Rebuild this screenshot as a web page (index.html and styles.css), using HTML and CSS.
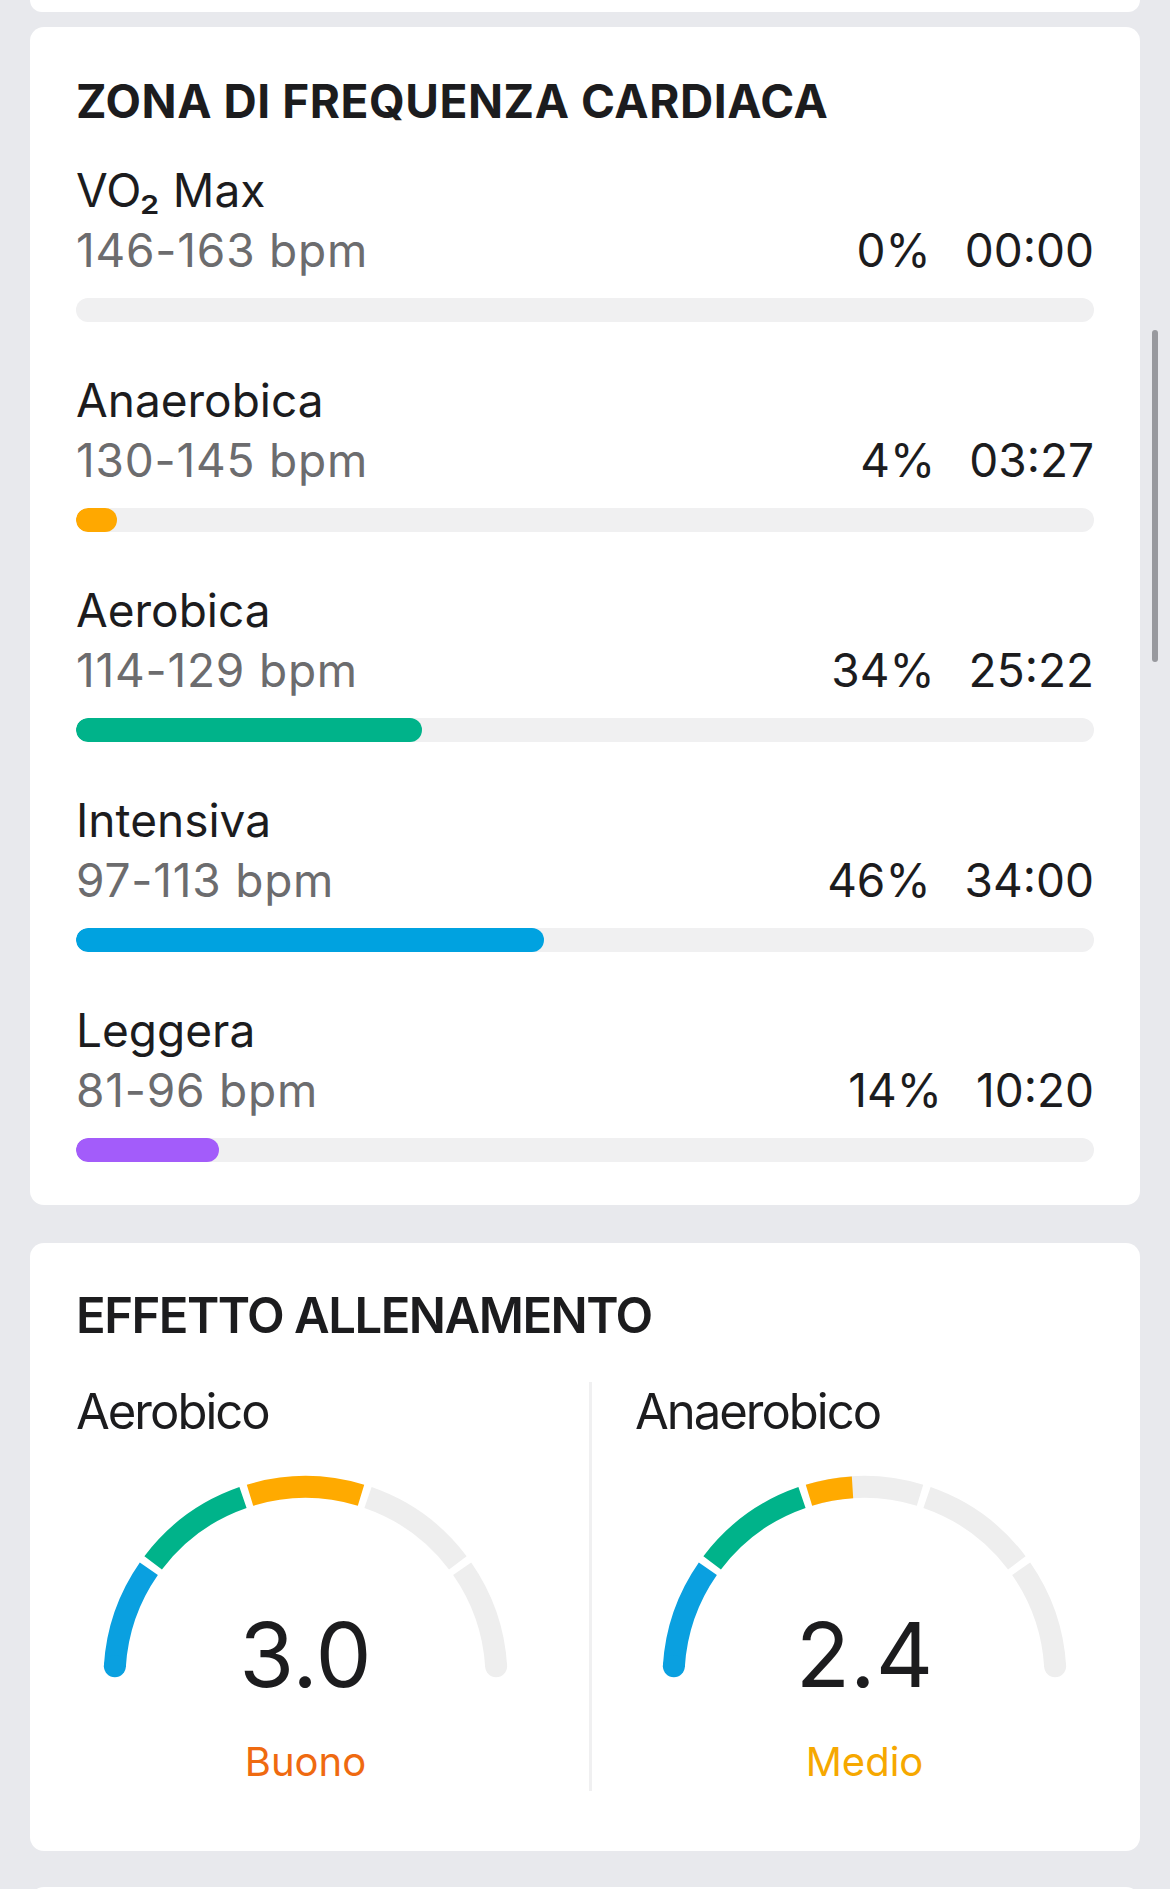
FILE: index.html
```html
<!DOCTYPE html>
<html lang="it">
  <head>
    <meta charset="UTF-8" />
    <meta name="viewport" content="width=device-width, initial-scale=1.0" />
    <title>Allenamento</title>
    <link rel="stylesheet" href="styles.css">
  </head>
  <body>
    <div class="screen">
      <div class="card card-stub"></div>

      <section class="card zones">
        <h2 class="card-title">ZONA DI FREQUENZA CARDIACA</h2>
        <div class="zone-list">
          <div class="zone">
            <div class="zone-name">VO₂ Max</div>
            <div class="zone-info">
              <span class="zone-range">146-163 bpm</span>
              <span class="zone-stats"><span>0%</span><span>00:00</span></span>
            </div>
            <div class="bar"><div class="bar-fill" style="width: 0%"></div></div>
          </div>
          <div class="zone">
            <div class="zone-name">Anaerobica</div>
            <div class="zone-info">
              <span class="zone-range">130-145 bpm</span>
              <span class="zone-stats"><span>4%</span><span>03:27</span></span>
            </div>
            <div class="bar"><div class="bar-fill anaerobic" style="width: 4%"></div></div>
          </div>
          <div class="zone">
            <div class="zone-name">Aerobica</div>
            <div class="zone-info">
              <span class="zone-range">114-129 bpm</span>
              <span class="zone-stats"><span>34%</span><span>25:22</span></span>
            </div>
            <div class="bar"><div class="bar-fill aerobic" style="width: 34%"></div></div>
          </div>
          <div class="zone">
            <div class="zone-name">Intensiva</div>
            <div class="zone-info">
              <span class="zone-range">97-113 bpm</span>
              <span class="zone-stats"><span>46%</span><span>34:00</span></span>
            </div>
            <div class="bar"><div class="bar-fill intensive" style="width: 46%"></div></div>
          </div>
          <div class="zone">
            <div class="zone-name">Leggera</div>
            <div class="zone-info">
              <span class="zone-range">81-96 bpm</span>
              <span class="zone-stats"><span>14%</span><span>10:20</span></span>
            </div>
            <div class="bar"><div class="bar-fill light" style="width: 14%"></div></div>
          </div>
        </div>
      </section>

      <section class="card effect">
        <h2 class="card-title large">EFFETTO ALLENAMENTO</h2>
        <div class="effect-cols">
          <div class="effect-col">
            <div class="effect-name">Aerobico</div>
            <svg class="gauge-dial" viewBox="0 0 459 224" width="459" height="224">
              <g fill="none" stroke-width="22">
                <path d="M38.86 200.34 A191 191 0 0 1 72.85 102.72" stroke="#0aa0e0" />
                <path d="M77.16 96.79 A191 191 0 0 1 167 31.51" stroke="#00b38a" />
                <path d="M173.98 29.25 A191 191 0 0 1 285.02 29.25" stroke="#ffaa00" />
                <path d="M292 31.51 A191 191 0 0 1 381.84 96.79" stroke="#eeeeee" />
                <path d="M386.15 102.72 A191 191 0 0 1 420.14 200.34" stroke="#eeeeee" />
              </g>
              <circle cx="38.86" cy="200.34" r="11" fill="#0aa0e0" />
              <circle cx="420.14" cy="200.34" r="11" fill="#eeeeee" />
            </svg>
            <div class="gauge-value">3.0</div>
            <div class="gauge-label good">Buono</div>
          </div>

          <div class="divider"></div>

          <div class="effect-col">
            <div class="effect-name">Anaerobico</div>
            <svg class="gauge-dial" viewBox="0 0 459 224" width="459" height="224">
              <g fill="none" stroke-width="22">
                <path d="M38.86 200.34 A191 191 0 0 1 72.85 102.72" stroke="#0aa0e0" />
                <path d="M77.16 96.79 A191 191 0 0 1 167 31.51" stroke="#00b38a" />
                <path d="M173.98 29.25 A191 191 0 0 1 285.02 29.25" stroke="#eeeeee" />
                <path d="M173.98 29.25 A191 191 0 0 1 217.51 21.38" stroke="#ffaa00" />
                <path d="M292 31.51 A191 191 0 0 1 381.84 96.79" stroke="#eeeeee" />
                <path d="M386.15 102.72 A191 191 0 0 1 420.14 200.34" stroke="#eeeeee" />
              </g>
              <circle cx="38.86" cy="200.34" r="11" fill="#0aa0e0" />
              <circle cx="420.14" cy="200.34" r="11" fill="#eeeeee" />
            </svg>
            <div class="gauge-value">2.4</div>
            <div class="gauge-label medium">Medio</div>
          </div>
        </div>
      </section>

      <div class="card card-stub bottom"></div>
    </div>

    <div class="scroll-indicator"></div>
  </body>
</html>
```

FILE: styles.css
```css
* {
  margin: 0;
  padding: 0;
  box-sizing: border-box;
}
body {
  font-family: Inter, "Noto Sans", sans-serif;
  background-color: #e8e9ed;
  color: #1c1c1e;
  position: relative;
  overflow: hidden;
}
.screen {
  width: 1170px;
  padding: 0 30px;
}
.card {
  background-color: #ffffff;
  border-radius: 14px;
}
.card-stub {
  height: 12px;
  border-radius: 0 0 14px 14px;
  margin-bottom: 15px;
}
.card-stub.bottom {
  height: 30px;
  border-radius: 14px 14px 0 0;
  margin-bottom: 0;
}
.card-title {
  font-size: 46px;
  font-weight: 700;
  line-height: 56px;
  letter-spacing: 0.55px;
}
.card-title.large {
  font-size: 49px;
  font-weight: 600;
  line-height: 60px;
  letter-spacing: -1.5px;
}

/* heart rate zones */
.zones {
  padding: 46px 46px 43px;
  margin-bottom: 38px;
}
.zone-list {
  display: flex;
  flex-direction: column;
  gap: 48px;
  margin-top: 31px;
}
.zone-name,
.zone-info {
  font-size: 46px;
  line-height: 60px;
}
.zone-info {
  display: flex;
  justify-content: space-between;
}
.zone-range {
  color: #6c6c6e;
  letter-spacing: 0.8px;
}
.zone-stats {
  display: flex;
  gap: 34px;
}
.bar {
  height: 24px;
  margin-top: 18px;
  background-color: #f0f0f1;
  border-radius: 12px;
  overflow: hidden;
}
.bar-fill {
  height: 100%;
  border-radius: 12px;
}
.bar-fill.anaerobic {
  background-color: #ffa800;
}
.bar-fill.aerobic {
  background-color: #00b38a;
}
.bar-fill.intensive {
  background-color: #00a2e0;
}
.bar-fill.light {
  background-color: #a35cfa;
}

/* training effect */
.effect {
  padding: 43px 46px 60px;
  margin-bottom: 36px;
}
.effect-cols {
  display: flex;
  margin-top: 36px;
}
.effect-col {
  width: 459px;
  padding-bottom: 7px;
}
.divider {
  width: 3px;
  background-color: #f0f0f1;
  margin: 0 43px 0 54px;
}
.effect-name {
  font-size: 49px;
  line-height: 60px;
  letter-spacing: -2px;
}
.gauge-dial {
  display: block;
  margin-top: 24px;
}
.gauge-value {
  font-size: 89px;
  line-height: 86px;
  text-align: center;
  margin-top: -78px;
}
.gauge-label {
  font-size: 40px;
  line-height: 44px;
  text-align: center;
  margin-top: 42px;
}
.gauge-label.good {
  color: #ef6a10;
}
.gauge-label.medium {
  color: #f6a800;
}
.scroll-indicator {
  position: absolute;
  left: 1152px;
  top: 330px;
  width: 6px;
  height: 332px;
  background-color: #98999e;
  border-radius: 3px;
}
```
